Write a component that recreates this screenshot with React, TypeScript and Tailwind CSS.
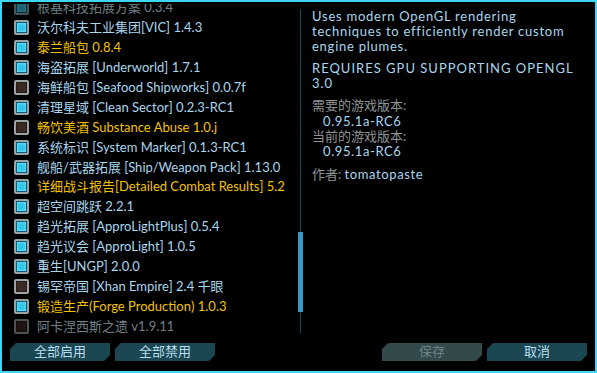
import React from "react";

type Mod = { name: string; on: boolean; yellow?: boolean; dim?: boolean };

const mods: Mod[] = [
  { name: "根基科技拓展方案 0.3.4", on: true, dim: true },
  { name: "沃尔科夫工业集团[VIC] 1.4.3", on: true },
  { name: "泰兰船包 0.8.4", on: true, yellow: true },
  { name: "海盗拓展 [Underworld] 1.7.1", on: true },
  { name: "海鲜船包 [Seafood Shipworks] 0.0.7f", on: false },
  { name: "清理星域 [Clean Sector] 0.2.3-RC1", on: true },
  { name: "畅饮美酒 Substance Abuse 1.0.j", on: false, yellow: true },
  { name: "系统标识 [System Marker] 0.1.3-RC1", on: true },
  { name: "舰船/武器拓展 [Ship/Weapon Pack] 1.13.0", on: true },
  { name: "详细战斗报告[Detailed Combat Results] 5.2", on: true, yellow: true },
  { name: "超空间跳跃 2.2.1", on: true },
  { name: "趋光拓展 [ApproLightPlus] 0.5.4", on: true },
  { name: "趋光议会 [ApproLight] 1.0.5", on: true },
  { name: "重生[UNGP] 2.0.0", on: true },
  { name: "锡罕帝国 [Xhan Empire] 2.4 千眼", on: false },
  { name: "锻造生产(Forge Production) 1.0.3", on: true, yellow: true },
  { name: "阿卡涅西斯之遗 v1.9.11", on: false, dim: true },
];

const font = { fontFamily: '"Lato", "Noto Sans CJK SC", sans-serif' };

function CheckBox({ on, dim }: { on: boolean; dim?: boolean }) {
  return (
    <div
      className={`w-[15px] h-[15px] shrink-0 rounded-[2px] bg-[#9aa4a6] p-[2px] ${dim ? "opacity-50" : ""}`}
    >
      <div
        className={
          on
            ? "w-full h-full border border-[#0b5a78] bg-[#2cc6ec] shadow-[inset_0_0_3px_#9ff0ff]"
            : "w-full h-full border border-[#2a1c18] bg-[#3b2a24]"
        }
      />
    </div>
  );
}

function ModRow({ mod }: { mod: Mod }) {
  const color = mod.dim
    ? "text-[#6f8088]"
    : mod.yellow
    ? "text-[#f2c200]"
    : "text-[#a9d6ee]";
  return (
    <div className="h-[19.9px] flex items-center gap-[8px] pl-[12px] whitespace-nowrap">
      <CheckBox on={mod.on} dim={mod.dim} />
      <span className={`text-[13px] leading-none ${color}`}>{mod.name}</span>
    </div>
  );
}

function Btn({ label, tone }: { label: string; tone: "on" | "off" }) {
  const bg = tone === "on" ? "bg-[#1a4752]" : "bg-[#33494b]";
  const fg = tone === "on" ? "text-[#b8def0]" : "text-[#6c8486]";
  return (
    <div
      className={`w-[100px] h-[18px] flex items-center justify-center text-[13px] ${bg} ${fg} [clip-path:polygon(6px_0,100%_0,100%_calc(100%-6px),calc(100%-6px)_100%,0_100%,0_6px)]`}
    >
      {label}
    </div>
  );
}

export default function App() {
  return (
    <div
      className="w-[597px] h-[373px] bg-black border-2 border-[#3fd6f6] flex flex-col overflow-hidden"
      style={font}
    >
      <div className="flex h-[335px]">
        <div className="w-[294px] mt-[2px] overflow-hidden">
          <div className="mt-[-6px]">
            {mods.map((m, i) => (
              <ModRow key={i} mod={m} />
            ))}
          </div>
        </div>

        <div className="w-[8px] flex justify-center pt-[7px] pb-[4px]">
          <div className="relative w-px h-full bg-[#184c64]">
            <div className="absolute left-[-2px] top-[223px] w-[5px] h-[80px] bg-[#3898c6]" />
          </div>
        </div>

        <div className="flex-1 pl-[8px] pr-[21px] pt-[7px] text-[13px] text-[#a9d6ee] leading-[15px]">
          <p className="tracking-[0.75px]">
            Uses modern OpenGL rendering techniques to efficiently render custom engine plumes.
          </p>
          <p className="mt-[7px] tracking-[1px] whitespace-nowrap">
            REQUIRES GPU SUPPORTING OPENGL
            <br />
            3.0
          </p>
          <div className="mt-[7px]">
            <div className="h-[15px] text-[#8e9496]">需要的游戏版本:</div>
            <div className="h-[16px] pl-[11px] flex items-center tracking-[0.6px]">0.95.1a-RC6</div>
            <div className="h-[14px] flex items-center text-[#8e9496]">当前的游戏版本:</div>
            <div className="h-[16px] pl-[11px] flex items-center tracking-[0.6px]">0.95.1a-RC6</div>
          </div>
          <div className="mt-[8px]">
            <span className="text-[#8e9496]">作者: </span>
            <span className="tracking-[0.6px]">tomatopaste</span>
          </div>
        </div>
      </div>

      <div className="flex items-center px-[8px] pt-[6px]">
        <div className="flex gap-[5px]">
          <Btn label="全部启用" tone="on" />
          <Btn label="全部禁用" tone="on" />
        </div>
        <div className="ml-auto flex gap-[5px]">
          <Btn label="保存" tone="off" />
          <Btn label="取消" tone="on" />
        </div>
      </div>
    </div>
  );
}
